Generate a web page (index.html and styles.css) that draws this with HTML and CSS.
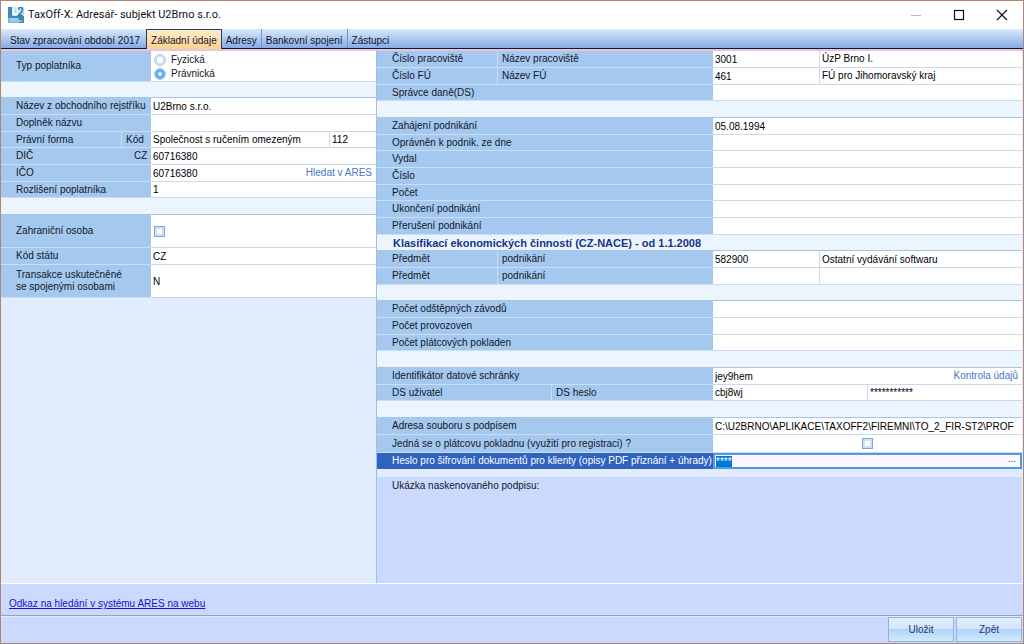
FILE: index.html
```
<!DOCTYPE html>
<html lang="cs">
<head>
  <meta charset="UTF-8" />
  <meta name="viewport" content="width=device-width, initial-scale=1.0" />
  <title>TaxOff-X: Adresář- subjekt U2Brno s.r.o.</title>
  <link rel="stylesheet" href="styles.css">
</head>
<body>
  <header class="titlebar">
    <svg class="logo" width="16" height="16" viewBox="0 0 16 16">
      <rect width="16" height="16" fill="#4389bd"/>
      <rect x="4" width="12" height="9" fill="#b9dff0"/>
      <path d="M0 11h11v5H0z" fill="#79b4d8"/>
      <path d="M5.500 0v5.500q0 2 2 2t2-2V0" fill="none" stroke="#fff" stroke-width="1.500"/>
      <path d="M10.500 2.500q0-2 2-2t2 2q0 2-4 6h4" fill="none" stroke="#3177b0" stroke-width="1.500"/>
      <path d="M1 12h9M2 14h12" stroke="#c3e2ef"/>
    </svg>
    <h1>TaxOff-X: Adresář- subjekt U2Brno s.r.o.</h1>
    <div class="win-buttons">
      <button type="button" aria-label="Minimalizovat" disabled><svg width="12" height="12" viewBox="0 0 12 12"><path d="M1 6.500h10" stroke="#bbb"/></svg></button>
      <button type="button" aria-label="Maximalizovat"><svg width="12" height="12" viewBox="0 0 12 12"><rect x="1.500" y="1.500" width="9" height="9" fill="none" stroke="#111" stroke-width="1.200"/></svg></button>
      <button type="button" aria-label="Zavřít"><svg width="12" height="12" viewBox="0 0 12 12"><path d="M1 1l10 10M11 1L1 11" stroke="#111" stroke-width="1.200"/></svg></button>
    </div>
  </header>

  <nav class="tabs">
    <button type="button">Stav zpracování období 2017</button>
    <button type="button" class="active">Základní údaje</button>
    <button type="button">Adresy</button>
    <button type="button">Bankovní spojení</button>
    <button type="button">Zástupci</button>
  </nav>

  <main class="panes">
    <section class="pane left">
      <div class="row tall">
        <div class="labels"><span class="label" id="typ">Typ poplatníka</span></div>
        <div class="fields radios" role="radiogroup" aria-labelledby="typ">
          <label><input type="radio" name="typ"> Fyzická</label>
          <label><input type="radio" name="typ" checked> Právnická</label>
        </div>
      </div>
      <div class="gap"></div>
      <div class="group">
        <div class="row">
          <div class="labels"><label for="nazev">Název z obchodního rejstříku</label></div>
          <div class="fields"><input type="text" id="nazev" value="U2Brno s.r.o."></div>
        </div>
        <div class="row">
          <div class="labels"><label for="doplnek">Doplněk názvu</label></div>
          <div class="fields"><input type="text" id="doplnek"></div>
        </div>
        <div class="row">
          <div class="labels"><label for="forma">Právní forma</label><label for="kod" class="code">Kód</label></div>
          <div class="fields"><input type="text" id="forma" value="Společnost s ručením omezeným"><input type="text" id="kod" class="short" value="112"></div>
        </div>
        <div class="row">
          <div class="labels"><label for="dic">DIČ</label><span class="prefix">CZ</span></div>
          <div class="fields"><input type="text" id="dic" value="60716380"></div>
        </div>
        <div class="row">
          <div class="labels"><label for="ico">IČO</label></div>
          <div class="fields"><input type="text" id="ico" value="60716380"><a href="#">Hledat v ARES</a></div>
        </div>
        <div class="row">
          <div class="labels"><label for="rozliseni">Rozlišení poplatníka</label></div>
          <div class="fields"><input type="text" id="rozliseni" value="1"></div>
        </div>
      </div>
      <div class="gap wide"></div>
      <div class="row high">
        <div class="labels"><label for="zahranicni">Zahraniční osoba</label></div>
        <div class="fields"><input type="checkbox" id="zahranicni"></div>
      </div>
      <div class="row">
        <div class="labels"><label for="stat">Kód státu</label></div>
        <div class="fields"><input type="text" id="stat" value="CZ"></div>
      </div>
      <div class="row high">
        <div class="labels"><label for="transakce">Transakce uskutečněné<br>se spojenými osobami</label></div>
        <div class="fields"><input type="text" id="transakce" value="N"></div>
      </div>
    </section>

    <section class="pane right">
      <div class="group">
        <div class="row">
          <div class="labels"><label for="cpra">Číslo pracoviště</label><label for="npra" class="second">Název pracoviště</label></div>
          <div class="fields"><input type="text" id="cpra" class="first" value="3001"><output id="npra">ÚzP Brno I.</output></div>
        </div>
        <div class="row">
          <div class="labels"><label for="cfu">Číslo FÚ</label><label for="nfu" class="second">Název FÚ</label></div>
          <div class="fields"><input type="text" id="cfu" class="first" value="461"><output id="nfu">FÚ pro Jihomoravský kraj</output></div>
        </div>
        <div class="row">
          <div class="labels"><label for="spravce">Správce daně(DS)</label></div>
          <div class="fields"><input type="text" id="spravce"></div>
        </div>
        <div class="gap"></div>
        <div class="row">
          <div class="labels"><label for="zahajeni">Zahájení podnikání</label></div>
          <div class="fields"><input type="text" id="zahajeni" value="05.08.1994"></div>
        </div>
        <div class="row">
          <div class="labels"><label for="opravnen">Oprávněn k podnik. ze dne</label></div>
          <div class="fields"><input type="text" id="opravnen"></div>
        </div>
        <div class="row">
          <div class="labels"><label for="vydal">Vydal</label></div>
          <div class="fields"><input type="text" id="vydal"></div>
        </div>
        <div class="row">
          <div class="labels"><label for="cislo">Číslo</label></div>
          <div class="fields"><input type="text" id="cislo"></div>
        </div>
        <div class="row">
          <div class="labels"><label for="pocet">Počet</label></div>
          <div class="fields"><input type="text" id="pocet"></div>
        </div>
        <div class="row">
          <div class="labels"><label for="ukonceni">Ukončení podnikání</label></div>
          <div class="fields"><input type="text" id="ukonceni"></div>
        </div>
        <div class="row">
          <div class="labels"><label for="preruseni">Přerušení podnikání</label></div>
          <div class="fields"><input type="text" id="preruseni"></div>
        </div>
        <h2 class="gap">Klasifikací ekonomických činností (CZ-NACE) - od 1.1.2008</h2>
        <div class="row">
          <div class="labels"><label for="p1">Předmět</label><label for="p1n" class="second">podnikání</label></div>
          <div class="fields"><input type="text" id="p1" class="first" value="582900"><input type="text" id="p1n" value="Ostatní vydávání softwaru"></div>
        </div>
        <div class="row">
          <div class="labels"><label for="p2">Předmět</label><label for="p2n" class="second">podnikání</label></div>
          <div class="fields"><input type="text" id="p2" class="first"><input type="text" id="p2n"></div>
        </div>
        <div class="gap"></div>
        <div class="row">
          <div class="labels"><label for="zavody">Počet odštěpných závodů</label></div>
          <div class="fields"><input type="text" id="zavody"></div>
        </div>
        <div class="row">
          <div class="labels"><label for="provozoven">Počet provozoven</label></div>
          <div class="fields"><input type="text" id="provozoven"></div>
        </div>
        <div class="row">
          <div class="labels"><label for="pokladen">Počet plátcových pokladen</label></div>
          <div class="fields"><input type="text" id="pokladen"></div>
        </div>
        <div class="gap"></div>
        <div class="row">
          <div class="labels"><label for="schranka">Identifikátor datové schránky</label></div>
          <div class="fields"><input type="text" id="schranka" value="jey9hem"><a href="#">Kontrola údajů</a></div>
        </div>
        <div class="row half">
          <div class="labels"><label for="dsu">DS uživatel</label><label for="dsh" class="second">DS heslo</label></div>
          <div class="fields"><input type="text" id="dsu" value="cbj8wj"><input type="text" id="dsh" value="***********"></div>
        </div>
        <div class="gap"></div>
        <div class="row">
          <div class="labels"><label for="soubor">Adresa souboru s podpisem</label></div>
          <div class="fields"><input type="text" id="soubor" value="C:\U2BRNO\APLIKACE\TAXOFF2\FIREMNI\TO_2_FIR-ST2\PROF"></div>
        </div>
      </div>
      <div class="row check">
        <div class="labels"><label for="platce">Jedná se o plátcovu pokladnu (využití pro registraci) ?</label></div>
        <div class="fields"><input type="checkbox" id="platce"></div>
      </div>
      <div class="row current">
        <div class="labels"><label for="heslo">Heslo pro šifrování dokumentů pro klienty (opisy PDF přiznání + úhrady)</label></div>
        <div class="fields"><input type="text" id="heslo" value="****"><button type="button">...</button></div>
      </div>
      <div class="signature">Ukázka naskenovaného podpisu:</div>
    </section>
  </main>

  <div class="ares"><a href="#">Odkaz na hledání v systému ARES na webu</a></div>
  <footer class="actions">
    <button type="button">Uložit</button>
    <button type="button">Zpět</button>
  </footer>

  <script>
    document.getElementById('heslo').select();
  </script>
</body>
</html>
```
FILE: styles.css
```
* { box-sizing: border-box; }
body {
  margin: 0;
  min-height: 100vh;
  display: flex; flex-direction: column;
  border: 1px solid #b08672;
  background: #fff; color: #101828;
  font: 10px/12px "Liberation Sans", Arial, sans-serif;
}
button, input { font: inherit; color: inherit; margin: 0; }

/* title bar */
.titlebar {
  display: flex; align-items: center;
  height: 28px; padding-left: 7px;
}
.titlebar h1 {
  margin: 0 0 0 4px; flex: 1;
  font: 11px/16px Roboto, "Segoe UI", sans-serif;
  color: #111;
}
.win-buttons { display: flex; }
.win-buttons button {
  width: 43px; height: 28px; padding: 0;
  border: 0; background: none;
  display: flex; align-items: center; justify-content: center;
}

/* tabs */
.tabs {
  display: flex;
  height: 20px; padding-left: 4px;
  background: linear-gradient(#dbe8fc, #86abe3);
  border-bottom: 1px solid #14143c;
}
.tabs button {
  padding: 4px 4px 0; border: 0;
  border-right: 1px solid #6f96cf;
  background: none;
}
.tabs button:first-child { padding: 4px 6px 0 5px; border-right: 0; }
.tabs button:last-child { border-right: 0; }
.tabs .active {
  border: 1px solid #26386e; border-bottom: 0;
  margin-bottom: -1px; padding-top: 2px;
  background: linear-gradient(#ffeccb, #ffcf8e);
}

/* form */
.panes {
  flex: 1;
  display: grid; grid-template-columns: 376px 1fr;
  padding-right: 1px;
  border-top: 2px solid #e3c9d4;
  background: #e1edfe;
}
.pane { min-width: 0; display: flex; flex-direction: column; }
.left { --labels: 150px; border-right: 1px solid #9fbfe8; }
.right { --labels: 336px; }
.row { display: flex; height: 17px; }
.gap { height: 16px; background: #ecf5fe; border-bottom: 1px solid #a8c3e4; }
.gap.wide { height: 17px; }
.group > * { height: 17px; }
.group > :nth-child(3n) { height: 16px; }
.row.tall { height: 31px; }
.row.high { height: 33px; }
.row.check { height: 18px; }
.row.current { height: 16px; }
.labels {
  flex: none; width: var(--labels);
  display: flex;
  background: #a5c8ef;
  border-bottom: 1px solid #c8dff8;
}
.labels > * {
  flex: 1; padding-left: 15px;
  display: flex; align-items: center;
  white-space: nowrap;
}
.labels .code { flex: none; width: 30px; padding-left: 4px; border-left: 1px solid #c8dff8; }
.labels .prefix { flex: none; width: 20px; padding-left: 3px; }
.labels .second {
  flex: none; width: calc(var(--labels) - 120px);
  padding-left: 4px; border-left: 1px solid #c8dff8;
}
.half .labels .second { width: 162px; }
.fields {
  flex: 1; min-width: 0;
  display: flex; align-items: center;
  background: #fff;
  border-bottom: 1px solid #c9daf0;
}
.fields input[type="text"], .fields output {
  flex: 1; min-width: 0; height: 100%;
  padding: 0 2px; border: 0; outline: 0;
  background: none; color: #000;
}
.fields output { line-height: 16px; }
.fields input + input[type="text"], .fields output { border-left: 1px solid #c9daf0; }
.fields .first[type="text"] { flex: none; width: 106px; }
.fields .short[type="text"] { flex: none; width: 47px; }
.fields a { padding-right: 4px; color: #4a76c2; text-decoration: none; }

.radios { flex-direction: column; align-items: flex-start; justify-content: center; padding: 1px 3px 0; }
.radios label { display: flex; align-items: center; gap: 5px; height: 14px; }
input[type="radio"], input[type="checkbox"] {
  appearance: none;
  width: 11px; height: 11px;
  border: 1px solid #7fa5d8;
  background: #fff;
  box-shadow: inset 0 0 0 2px #cfe1f7;
}
input[type="radio"] { width: 12px; height: 12px; border-color: #a9c4e6; border-radius: 50%; }
input[type="radio"]:checked { background: #e8f5ff; box-shadow: inset 0 0 0 3px #63aeec; }
.left input[type="checkbox"] { margin-left: 3px; }
.check input[type="checkbox"] { margin: auto; }

h2 {
  margin: 0; padding-left: 16px;
  font: bold 11px/16px "Liberation Sans", Arial, sans-serif;
  color: #15348c;
}
.current .labels { background: #2f63bf; color: #fff; border-color: #2f63bf; }
.current .fields { background: #fdf8ff; border: 2px solid #4d9be6; }
.current .fields input[type="text"] { padding-left: 1px; }
.current button { border: 0; padding: 0 4px 4px; background: none; color: #456; }
::selection { background: #0078d7; color: #fff; }
.signature {
  flex: 1; margin-top: 8px; padding: 3px 15px;
  background: #ccd9ff;
}

/* bottom */
.ares {
  height: 33px; padding: 14px 8px 0;
  border-top: 1px solid #fff; border-bottom: 1px solid #8fa3c0;
  background: #ccd9ff;
}
.ares a { color: #1414c8; }
.actions {
  display: flex; justify-content: flex-end; gap: 2px;
  height: 27px; padding: 0 1px 1px 0;
  border-top: 1px solid #e1edfe;
  background: #ccd9ff;
}
.actions button {
  width: 66px; padding: 0;
  border: 1px solid #8db4e4;
  background: linear-gradient(#e4effd, #d4e6fb 45%, #b2d4f6 50%, #cfeaff);
  color: #1d3c78;
}
```
